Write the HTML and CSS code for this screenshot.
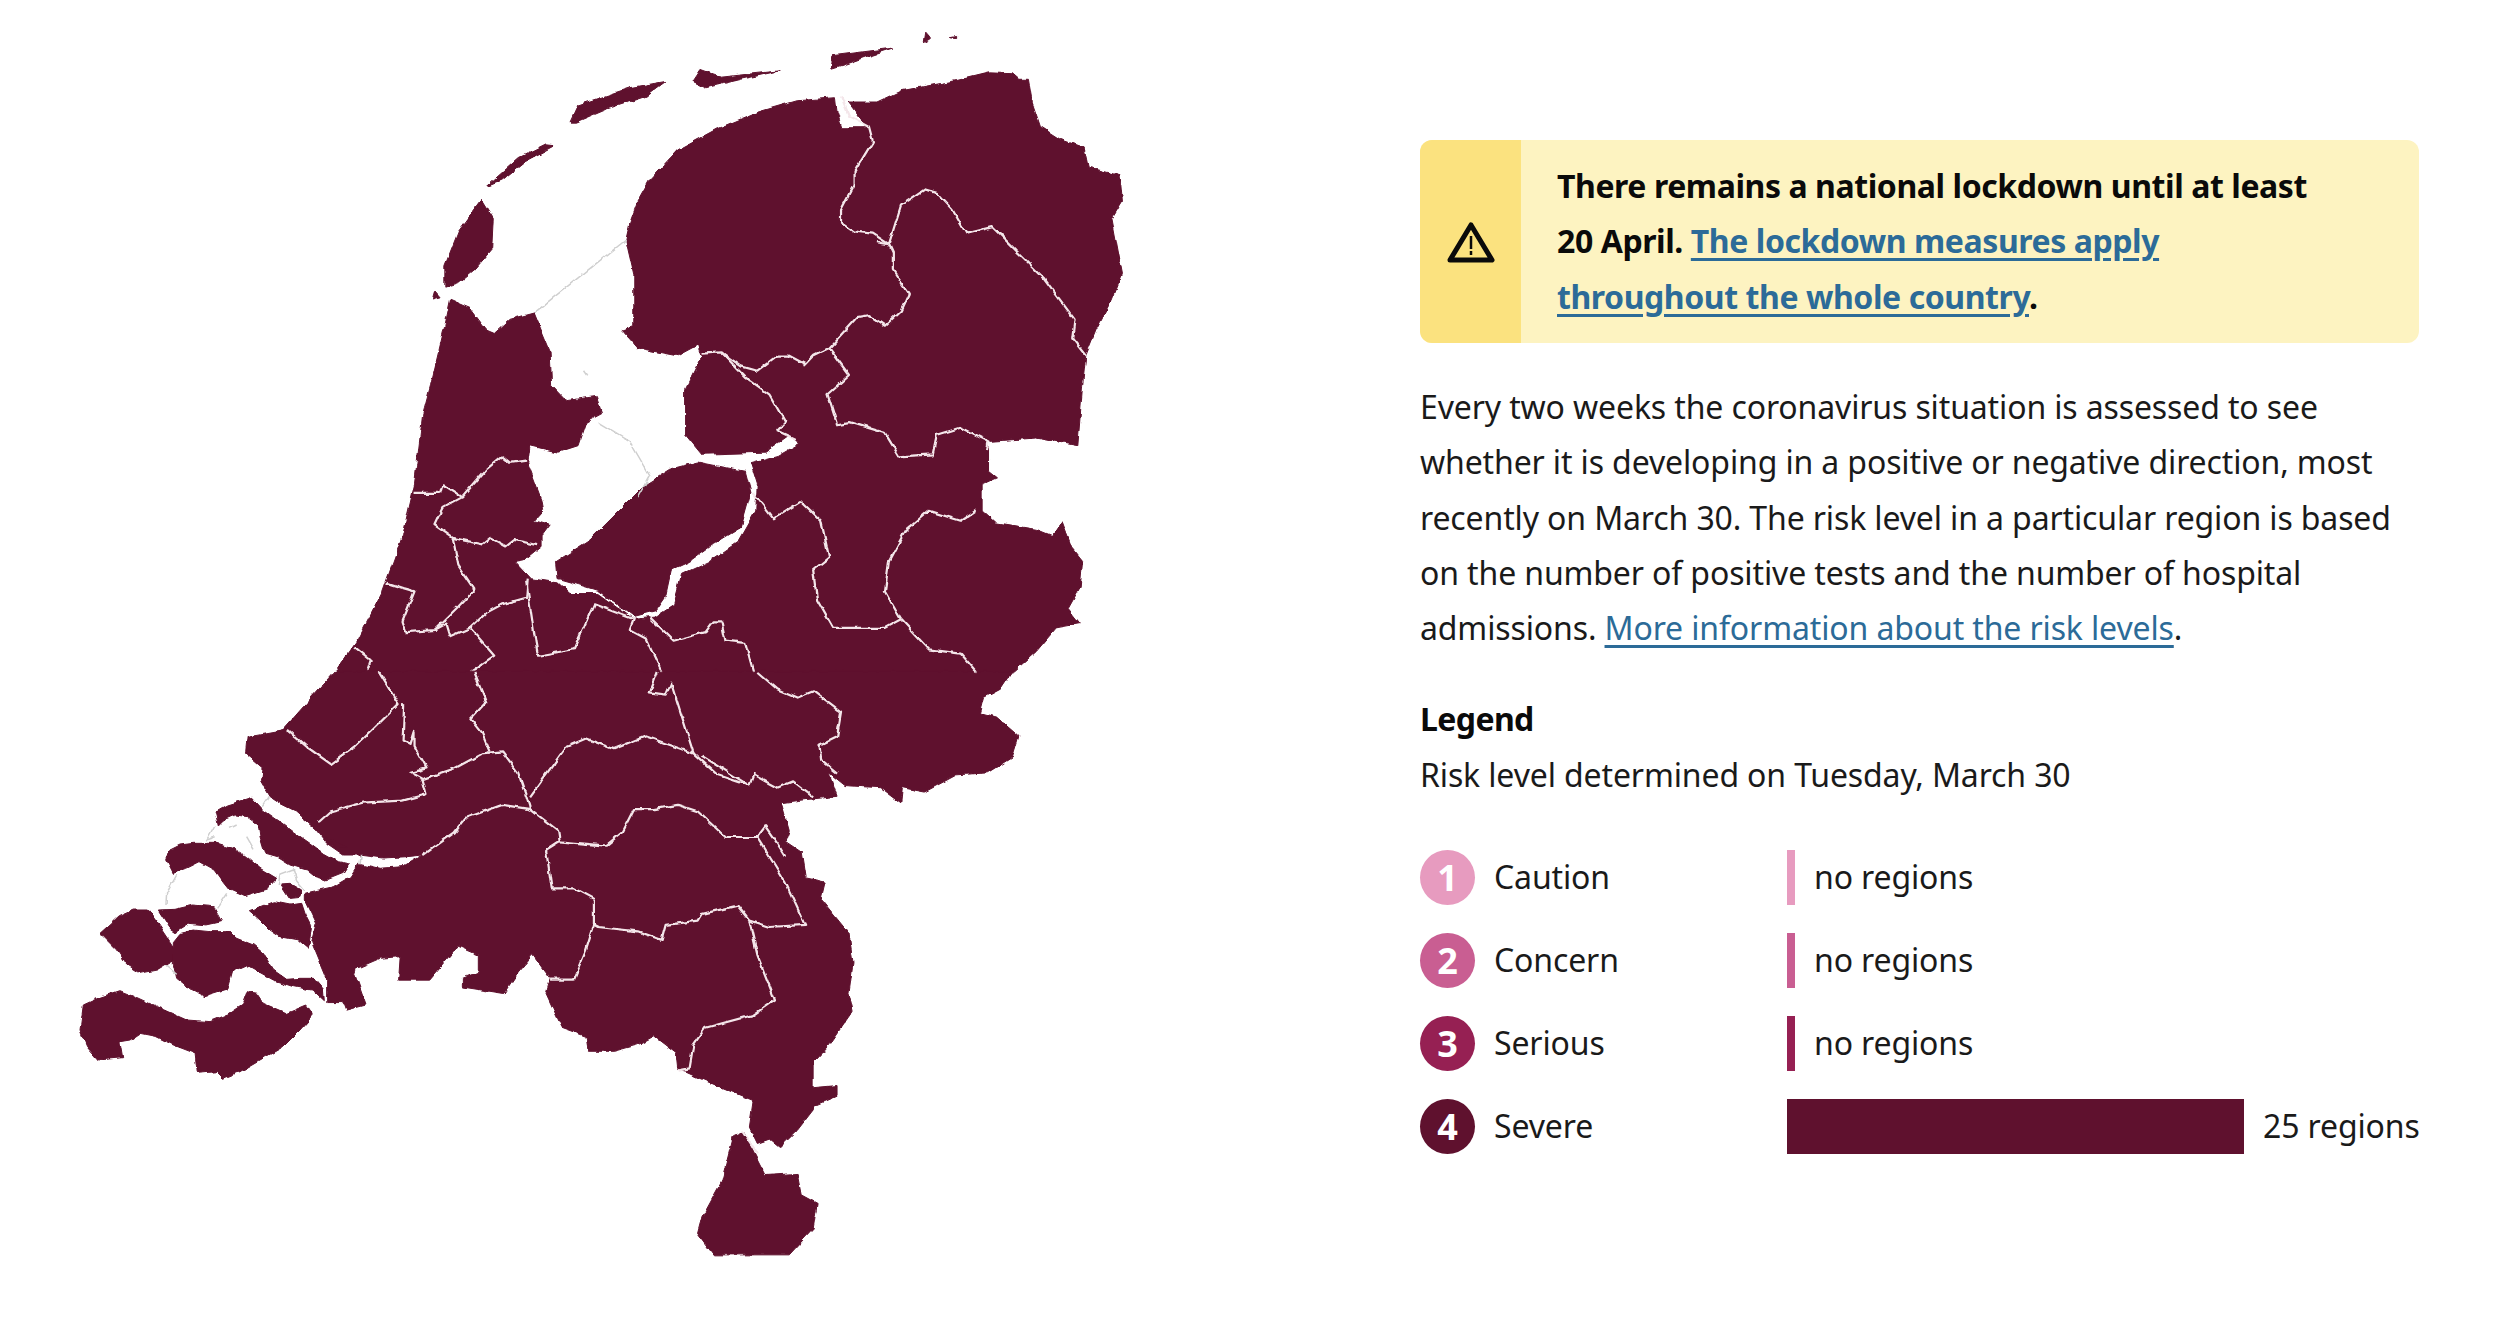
FILE: index.html
```html
<!DOCTYPE html>
<html lang="en">
<head>
<meta charset="utf-8">
<title>Risk levels</title>
<link rel="stylesheet" href="styles.css">
</head>
<body>
<main class="page">
  <svg class="map" viewBox="0 0 1568 3136" preserveAspectRatio="none" aria-label="Map of the Netherlands">
    <defs>
      <filter id="jag" filterUnits="userSpaceOnUse" x="0" y="0" width="1568" height="3136" color-interpolation-filters="sRGB">
        <feTurbulence type="fractalNoise" baseFrequency="0.1" numOctaves="2" seed="4" result="noise"/>
        <feDisplacementMap in="SourceGraphic" in2="noise" scale="5" xChannelSelector="R" yChannelSelector="G"/>
        <feGaussianBlur stdDeviation="0.7"/>
      </filter>
    </defs>
    <g class="land">
      <polygon points="785,560 790,520 800,470 815,420 850,350 900,300 950,262 1000,235 1048,228 1050,262 1056,298 1088,298 1064,238 1100,238 1130,212 1200,188 1240,170 1270,172 1278,185 1290,185 1295,240 1305,295 1330,325 1360,345 1365,390 1405,410 1408,470 1395,510 1408,640 1395,700 1375,770 1362,830 1358,900 1352,1040 1300,1022 1240,1030 1240,1100 1250,1115 1232,1130 1232,1190 1250,1220 1300,1235 1320,1250 1332,1215 1345,1280 1358,1310 1355,1370 1340,1420 1355,1455 1325,1465 1300,1520 1270,1570 420,1570 450,1490 480,1380 505,1250 520,1130 530,970 540,900 558,760 565,700 590,720 610,770 620,778 640,745 670,730 690,820 692,900 710,935 748,925 755,965 735,985 725,1040 700,1055 665,1040 662,1080 680,1170 682,1190 670,1215 690,1225 680,1250 680,1275 660,1305 645,1310 665,1350 700,1360 715,1385 750,1385 795,1445 820,1440 845,1410 855,1340 890,1310 925,1265 948,1190 950,1130 942,1082 975,1065 1003,1035 990,1015 960,1055 880,1060 860,1015 860,910 880,835 875,805 850,830 800,812 780,770 795,760 795,640"/>
      <polygon points="875,1078 935,1100 942,1150 930,1230 895,1270 865,1310 842,1330 835,1390 822,1425 795,1438 750,1378 715,1358 700,1350 698,1310 740,1260 810,1130 840,1095"/>
      <polygon points="605,465 620,510 618,580 595,630 575,660 558,670 558,620 575,540"/>
      <polygon points="545,680 552,695 542,700"/>
      <polygon points="610,435 650,370 685,338 695,340 660,375 630,420"/>
      <polygon points="715,285 725,245 790,205 835,190 810,225 760,255 722,285"/>
      <polygon points="868,190 878,162 905,180 980,165 930,185 885,205"/>
      <polygon points="1042,160 1045,130 1120,112 1090,130 1060,150"/>
      <polygon points="1158,100 1160,75 1167,90"/>
      <polygon points="1192,88 1200,85 1200,90"/>
    </g>
    <g class="border">
      <polyline points="1055,225 1065,270 1090,295 1095,330 1072,400 1072,430 1055,490 1055,520 1070,540 1095,545 1115,570 1120,590 1120,630 1140,685 1130,725 1110,760 1090,735 1075,740 1040,812 1020,830 1010,850 990,830 975,830 950,865 930,855 905,822 880,825"/>
      <polyline points="1100,565 1115,570 1130,480 1160,442 1175,450 1195,490 1212,545 1245,530 1310,650 1348,745 1345,790 1362,830"/>
      <polyline points="1040,812 1065,875 1038,920 1050,990 1065,985 1110,1010 1128,1065 1170,1060 1175,1015 1205,998 1240,1030 1238,1050"/>
      <polyline points="905,822 935,880 965,920 985,985 975,1005 998,1025"/>
      <polyline points="945,1150 970,1210 1005,1170 1030,1215 1040,1300 1020,1330 1025,1400 1045,1465 1110,1465 1130,1445 1110,1380 1115,1310 1135,1240 1165,1192 1205,1215 1225,1190"/>
      <polyline points="1130,1445 1165,1515 1205,1525 1225,1568"/>
      <polyline points="520,1150 552,1150 555,1130 580,1160 610,1095 630,1065 640,1080 660,1075"/>
      <polyline points="580,1160 555,1185 545,1225 568,1255 605,1270 615,1255 635,1275 645,1260 675,1272"/>
      <polyline points="568,1255 575,1320 595,1375 575,1415 545,1470 510,1475 505,1450 520,1380 505,1372 485,1360"/>
      <polyline points="545,1470 560,1455 565,1485 590,1465 610,1430 630,1410 660,1395 662,1350"/>
      <polyline points="660,1355 672,1500 675,1530 720,1515 745,1410 795,1445 790,1470 810,1490 830,1568"/>
      <polyline points="590,1465 620,1530 590,1568"/>
      <polyline points="815,1440 845,1495 885,1475 895,1450 905,1450 910,1495 935,1500 945,1568"/>
      <polyline points="445,1510 465,1540 460,1568"/>
    </g>
    <g class="water-line">
      <polyline points="785,560 670,730"/>
      <polyline points="750,985 790,1030 815,1110 800,1160"/>
      <polyline points="732,865 736,876"/>
    </g>
    <g transform="translate(0 1568)">
      <g class="land">
        <polygon points="1270,-2 1255,40 1235,60 1230,95 1250,105 1278,150 1270,200 1240,235 1200,240 1160,280 1132,270 1130,305 1105,270 1060,265 1040,235 1050,290 1000,300 980,305 990,370 985,395 1005,420 1010,480 1035,490 1030,530 1065,610 1070,680 1065,750 1070,790 1040,870 1020,910 1020,970 1050,965 1050,990 1025,1010 1000,1070 978,1110 965,1090 950,1100 940,1062 945,1000 925,985 880,950 850,925 848,890 820,850 800,870 770,885 738,885 735,850 705,830 685,750 690,715 668,660 650,700 632,750 580,735 580,715 600,700 600,660 575,640 573,645 539,719 500,719 502,664 477,668 447,692 445,703 459,777 435,789 431,769 411,769 411,719 391,629 397,586 383,532 383,516 418,501 439,478 450,446 477,458 506,454 531,427 510,431 480,434 451,427 431,427 410,400 397,369 368,322 351,306 339,291 328,256 330,225 308,190 310,150 355,135 420,-2"/>
        <polygon points="920,1082 932,1072 945,1120 960,1175 1000,1170 1005,1220 1025,1240 1020,1300 990,1360 895,1360 875,1310 880,1275 905,1190"/>
      </g>
      <g class="border">
        <polyline points="360,135 385,175 415,215 445,175 470,130 500,75 475,0"/>
        <polyline points="507,75 505,160 515,170 520,140 520,175 535,225 515,235 530,250 570,225 605,190 630,185 650,235 660,290 665,320 700,370 702,395 685,415 692,505 720,505 745,530 745,590 735,650 720,718 690,718"/>
        <polyline points="530,250 535,285 505,300 455,305 415,325 400,350"/>
        <polyline points="595,0 610,70 590,110 605,145 615,190"/>
        <polyline points="665,290 710,175 735,155 770,180 810,150 870,190 900,240 940,265"/>
        <polyline points="825,0 815,50 835,55 842,25 870,190"/>
        <polyline points="880,195 940,265 945,240 975,270 995,255 1020,290"/>
        <polyline points="950,0 975,40 1000,60 1020,45 1055,95 1050,150 1028,170 1030,205 1050,235"/>
        <polyline points="531,427 570,375 585,340 630,310 665,320"/>
        <polyline points="702,395 760,405 780,375 795,320 820,320 850,310 875,325 910,385 950,385 985,490 1010,590 965,595 940,580 925,545 880,565 875,580 835,590 830,625 800,605 750,595 745,590"/>
        <polyline points="950,385 960,360 975,400 985,430"/>
        <polyline points="940,580 950,660 972,765 945,800 885,830 870,870 865,925 850,930"/>
        <polyline points="930,1070 950,1125"/>
      </g>
    </g>
    <g transform="translate(75.26 1773.33) scale(0.41813 0.77778)">
      <g class="land">
        <polygon points="465,155 500,135 575,112 610,150 660,185 700,215 750,250 790,280 835,305 868,312 850,340 800,360 765,350 740,330 690,315 650,290 615,280 600,230 595,195 560,170 525,165 490,180 475,195"/>
        <polygon points="320,300 330,270 360,255 400,250 470,250 520,265 560,290 600,325 650,355 620,390 555,410 510,390 490,365 465,330 420,305 380,325 340,340"/>
        <polygon points="795,232 860,262 830,264"/>
        <polygon points="662,372 690,370 725,390 720,412 690,415"/>
        <polygon points="568,452 640,425 690,435 725,430 735,460 755,500 745,565 715,540 660,530 630,510 600,480"/>
        <polygon points="295,450 345,448 400,435 460,440 485,485 440,495 385,490 345,515 330,505"/>
        <polygon points="120,520 175,470 220,450 265,450 300,500 340,560 340,600 290,630 240,640 200,615 170,570"/>
        <polygon points="340,545 360,520 400,510 450,515 505,515 530,535 580,555 610,580 640,630 680,658 720,655 760,655 790,690 793,725 755,690 700,680 640,660 560,615 515,635 500,690 435,710 395,690 350,655 340,610"/>
        <polygon points="70,735 120,712 180,692 225,710 290,740 380,780 450,785 500,765 545,735 560,695 590,700 610,730 680,760 740,735 760,765 720,810 670,860 600,900 540,935 490,955 470,935 412,940 405,880 340,855 290,830 240,820 210,840 180,845 188,893 115,900 80,860 60,810"/>
      </g>
      <g class="water-line">
        <polyline points="628,112 610,140"/>
        <polyline points="465,195 440,240 470,230"/>
        <polyline points="350,345 320,400 318,435"/>
        <polyline points="500,400 470,445"/>
        <polyline points="655,375 660,345 700,330 710,360 735,390"/>
        <polyline points="905,280 900,310"/>
        <polyline points="510,205 530,195"/>
        <polyline points="560,230 582,268"/>
        <polyline points="320,615 350,640"/>
      </g>
    </g>
  </svg>
  <section class="panel">
    <div class="alert">
      <div class="alert-icon">
        <svg class="warn" viewBox="0 0 48 42" aria-hidden="true">
          <path class="warn-tri" d="M24 4 L45 39 H3 Z"/>
          <path class="warn-mark" d="M24 15 V28 M24 30 V34"/>
        </svg>
      </div>
      <p class="alert-text">There remains a national lockdown until at least<br>20 April. <a href="#">The lockdown measures apply<br>throughout the whole country</a>.</p>
    </div>
    <p class="intro">Every two weeks the coronavirus situation is assessed to see<br>whether it is developing in a positive or negative direction, most<br>recently on March 30. The risk level in a particular region is based<br>on the number of positive tests and the number of hospital<br>admissions. <a href="#">More information about the risk levels</a>.</p>
    <h2 class="legend-title">Legend</h2>
    <p class="legend-sub">Risk level determined on Tuesday, March 30</p>
    <ul class="legend">
      <li class="row">
        <span class="level level-1">1</span><span class="name">Caution</span>
        <span class="track"><span class="bar level-1" style="width:8px"></span><span class="count">no regions</span></span>
      </li>
      <li class="row">
        <span class="level level-2">2</span><span class="name">Concern</span>
        <span class="track"><span class="bar level-2" style="width:8px"></span><span class="count">no regions</span></span>
      </li>
      <li class="row">
        <span class="level level-3">3</span><span class="name">Serious</span>
        <span class="track"><span class="bar level-3" style="width:8px"></span><span class="count">no regions</span></span>
      </li>
      <li class="row">
        <span class="level level-4">4</span><span class="name">Severe</span>
        <span class="track"><span class="bar level-4" style="width:457px"></span><span class="count">25 regions</span></span>
      </li>
    </ul>
  </section>
</main>
</body>
</html>
```
FILE: styles.css
```css
* { box-sizing: border-box; }
html, body { margin: 0; padding: 0; background: #fff; }
body {
  font-family: "Noto Sans", "Open Sans", sans-serif;
  font-size: 32px;
  line-height: 55px;
  letter-spacing: -0.13px;
  color: #1a1a1a;
  overflow: hidden;
}
a { color: #2c6b98; text-decoration: underline; text-underline-offset: 5px; }
.page { display: flex; width: 2500px; height: 1344px; }
.map { width: 1250px; height: 1344px; flex: none; display: block; filter: url(#jag); }
.land polygon { fill: #5f112e; stroke: #5f112e; stroke-width: 1; vector-effect: non-scaling-stroke; stroke-linejoin: round; }
.border polyline { fill: none; stroke: #f4e6ea; stroke-width: 2.2; vector-effect: non-scaling-stroke; stroke-linejoin: round; }
.water-line polyline { fill: none; stroke: #cfcfcf; stroke-width: 1.5; vector-effect: non-scaling-stroke; }
.panel { margin-left: 170px; padding-top: 140px; width: 999px; flex: none; }
.alert { display: flex; height: 203px; border-radius: 12px; overflow: hidden; background: #fdf3c1; }
.alert-icon { width: 101px; flex: none; background: #fbe27f; display: flex; align-items: center; justify-content: center; }
.warn { width: 48px; height: 42px; display: block; }
.warn-tri { fill: none; stroke: #0a0a0a; stroke-width: 5; stroke-linejoin: round; }
.warn-mark { fill: none; stroke: #0a0a0a; stroke-width: 2.5; }
.alert-text { margin: 18px 0 0 36px; line-height: 55.3px; font-weight: 700; letter-spacing: -0.42px; color: #0a0a0a; }
.intro { margin: 36px 0 0; line-height: 55.25px; }
.legend-title { margin: 36px 0 0; font-size: 32px; line-height: 55px; font-weight: 700; letter-spacing: -0.6px; color: #0a0a0a; }
.legend-sub { margin: 1px 0 0; }
.legend { list-style: none; margin: 48px 0 0; padding: 0; display: flex; flex-direction: column; gap: 28px; }
.row { display: flex; align-items: center; height: 55px; }
.level { width: 55px; height: 55px; border-radius: 50%; flex: none; color: #fff; font-weight: 700; font-size: 36px; line-height: 1; display: flex; align-items: center; justify-content: center; }
.name { width: 312px; flex: none; padding: 0 0 3px 19px; }
.track { display: flex; align-items: center; gap: 19px; height: 55px; flex: 1; }
.bar { display: block; height: 55px; flex: none; }
.count { white-space: nowrap; padding-bottom: 3px; }
.level-1 { background: #e79bbf; }
.level-2 { background: #c95e92; }
.level-3 { background: #962053; }
.level-4 { background: #5f112e; }
```
